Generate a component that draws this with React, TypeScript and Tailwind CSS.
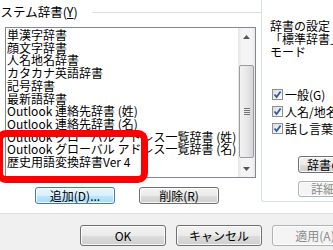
import React from 'react';

const ITEMS = [
  '単漢字辞書',
  '顔文字辞書',
  '人名地名辞書',
  'カタカナ英語辞書',
  '記号辞書',
  '最新語辞書',
  'Outlook 連絡先辞書 (姓)',
  'Outlook 連絡先辞書 (名)',
  'Outlook グローバル アドレス一覧辞書 (姓)',
  'Outlook グローバル アドレス一覧辞書 (名)',
  '歴史用語変換辞書Ver 4',
];

const FONT = { fontFamily: '"Noto Sans CJK JP", "Noto Sans", sans-serif' };

function WinButton({
  children,
  className = '',
  variant = 'normal',
}: {
  children: React.ReactNode;
  className?: string;
  variant?: 'normal' | 'default' | 'disabled';
}) {
  const skin =
    variant === 'default'
      ? 'border-[#3c7fb1] bg-[linear-gradient(#eaf6fd_0%,#d9f0fc_50%,#bee6fd_51%,#a7d9f5_100%)] text-[#000]'
      : variant === 'disabled'
      ? 'border-[#adb2b5] bg-[#f4f4f4] text-[#8d8d8d]'
      : 'border-[#707070] bg-[linear-gradient(#f2f2f2_0%,#ebebeb_50%,#dddddd_51%,#cfcfcf_100%)] text-[#000]';
  return (
    <div
      className={`flex items-center justify-center rounded-[3px] border text-[12px] leading-none shadow-[inset_0_0_0_1px_rgba(255,255,255,0.8)] ${skin} ${className}`}
    >
      {children}
    </div>
  );
}

function Check({ label }: { label: string }) {
  return (
    <div className="flex h-[15px] items-center gap-[2px] whitespace-nowrap text-[12px]">
      <div className="flex h-[11px] w-[11px] shrink-0 items-center justify-center border border-[#8f8f8f] bg-[linear-gradient(135deg,#dcdcdc,#ffffff)]">
        <svg width="9" height="9" viewBox="0 0 9 9">
          <path d="M1.5 4.5 L3.6 7 L7.6 1.5" fill="none" stroke="#2a5aa8" strokeWidth="1.8" />
        </svg>
      </div>
      <span>{label}</span>
    </div>
  );
}

function ScrollBar() {
  return (
    <div className="flex w-[17px] shrink-0 flex-col bg-[linear-gradient(90deg,#e3e3e3,#f4f4f4_20%,#f4f4f4_80%,#e8e8e8)]">
      <div className="flex h-[17px] items-center justify-center">
        <svg width="7" height="4" viewBox="0 0 7 4">
          <path d="M0 4 L3.5 0 L7 4 Z" fill="#555" />
        </svg>
      </div>
      <div className="h-[20px]" />
      <div className="mx-[1px] flex h-[93px] flex-col items-center justify-center gap-[1px] rounded-[2px] border border-[#9c9c9c] bg-[linear-gradient(90deg,#f3f3f3,#e8e8e8_50%,#d6d6d6)]">
        <div className="h-[1px] w-[6px] bg-[#777]" />
        <div className="h-[1px] w-[6px] bg-[#777]" />
        <div className="h-[1px] w-[6px] bg-[#777]" />
        <div className="h-[1px] w-[6px] bg-[#777]" />
      </div>
      <div className="flex-1" />
      <div className="flex h-[17px] items-center justify-center">
        <svg width="7" height="4" viewBox="0 0 7 4">
          <path d="M0 0 L3.5 4 L7 0 Z" fill="#555" />
        </svg>
      </div>
    </div>
  );
}

export default function App() {
  return (
    <div className="relative h-[250px] w-[333px] overflow-hidden bg-white text-black" style={FONT}>
      <div className="flex h-[213px]">
        {/* left group: system dictionaries */}
        <div className="flex w-[261px] shrink-0 flex-col">
          <div className="flex h-[27px] items-start">
            <span className="ml-[-12px] mt-[4px] whitespace-nowrap text-[12.5px] leading-[16px]">
              システム辞書(<span className="underline">Y</span>)
            </span>
            <div className="ml-[14px] mt-[12px] h-[1px] flex-1 bg-[#d5dfe5]" />
          </div>
          <div className="ml-[5px] flex h-[151px] w-[251px] border border-[#828790] bg-white">
            <div className="flex-1 overflow-hidden pl-[1px] pt-[1px]">
              {ITEMS.map((item) => (
                <div key={item} className="whitespace-nowrap text-[12px] leading-[12.7px]">
                  {item}
                </div>
              ))}
            </div>
            <ScrollBar />
          </div>
          <div className="mt-[9px] flex gap-[24px] pl-[35px]">
            <WinButton variant="default" className="h-[17px] w-[80px]">
              追加(D)...
            </WinButton>
            <WinButton className="h-[17px] w-[80px]">削除(R)</WinButton>
          </div>
        </div>

        {/* right group: dictionary settings */}
        <div className="flex h-[202px] flex-1 flex-col rounded-bl-[3px] border-b border-l border-[#d5dfe5] pl-[8px]">
          <div className="mt-[19px] whitespace-nowrap text-[12px] leading-[13px]">
            <div>辞書の設定</div>
            <div>「標準辞書」の変換</div>
            <div>モード</div>
          </div>
          <div className="mt-[29px] flex flex-col gap-[2px] pl-[2px]">
            <Check label="一般(G)" />
            <Check label="人名/地名(N)" />
            <Check label="話し言葉優先(S)" />
          </div>
          <div className="mt-[20px] flex flex-col gap-[8px] pl-[28px]">
            <WinButton className="h-[17px] w-[90px] justify-start pl-[8px]">辞書の設定</WinButton>
            <WinButton variant="disabled" className="h-[16px] w-[90px] justify-start pl-[12px]">
              詳細設定
            </WinButton>
          </div>
        </div>
      </div>

      {/* bottom button strip */}
      <div className="h-[37px] border-t border-[#dfdfdf] bg-[#f0f0f0] pt-[11px]">
        <div className="flex gap-[10px] pl-[80px]">
          <WinButton className="h-[21px] w-[86px] shrink-0">OK</WinButton>
          <WinButton className="h-[21px] w-[86px] shrink-0">キャンセル</WinButton>
          <WinButton variant="disabled" className="h-[21px] w-[86px] shrink-0">
            適用(A)
          </WinButton>
        </div>
      </div>

      {/* red annotation frame */}
      <div className="absolute left-[-4px] top-[130px] h-[53px] w-[152px] rounded-[10px] border-[7px] border-[#ff0000]" />
    </div>
  );
}
